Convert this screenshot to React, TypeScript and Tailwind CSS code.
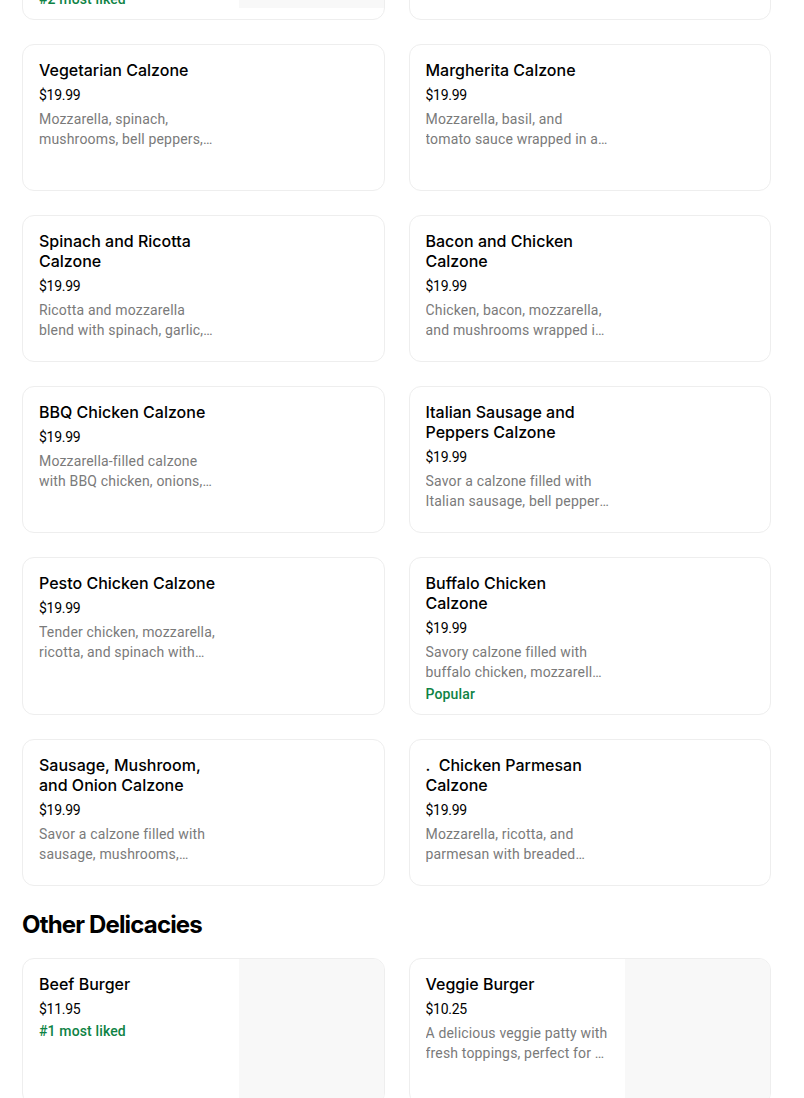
import React from 'react';

interface Item {
  name: string;
  price: string;
  desc?: string;
  tag?: string;
  image?: boolean;
}

const calzones: Item[] = [
  { name: 'Pepperoni and Sausage Calzone', price: '$19.99', desc: 'Pepperoni, sausage and mozzarella wrapped in a golden crust.', tag: '#2 most liked', image: true },
  { name: 'Meat Lovers Calzone', price: '$19.99', desc: 'Pepperoni, ham, bacon and sausage with mozzarella.' },
  { name: 'Vegetarian Calzone', price: '$19.99', desc: 'Mozzarella, spinach, mushrooms, bell peppers, onions and olives baked to perfection.' },
  { name: 'Margherita Calzone', price: '$19.99', desc: 'Mozzarella, basil, and tomato sauce wrapped in a crispy crust.' },
  { name: 'Spinach and Ricotta Calzone', price: '$19.99', desc: 'Ricotta and mozzarella blend with spinach, garlic, and herbs.' },
  { name: 'Bacon and Chicken Calzone', price: '$19.99', desc: 'Chicken, bacon, mozzarella, and mushrooms wrapped in a golden crust.' },
  { name: 'BBQ Chicken Calzone', price: '$19.99', desc: 'Mozzarella-filled calzone with BBQ chicken, onions, and cilantro.' },
  { name: 'Italian Sausage and Peppers Calzone', price: '$19.99', desc: 'Savor a calzone filled with Italian sausage, bell peppers and onions.' },
  { name: 'Pesto Chicken Calzone', price: '$19.99', desc: 'Tender chicken, mozzarella, ricotta, and spinach with basil pesto.' },
  { name: 'Buffalo Chicken Calzone', price: '$19.99', desc: 'Savory calzone filled with buffalo chicken, mozzarella and ranch.', tag: 'Popular' },
  { name: 'Sausage, Mushroom, and Onion Calzone', price: '$19.99', desc: 'Savor a calzone filled with sausage, mushrooms, onions and mozzarella.' },
  { name: '.  Chicken Parmesan Calzone', price: '$19.99', desc: 'Mozzarella, ricotta, and parmesan with breaded chicken and marinara.' },
];

const others: Item[] = [
  { name: 'Beef Burger', price: '$11.95', tag: '#1 most liked', image: true },
  { name: 'Veggie Burger', price: '$10.25', desc: 'A delicious veggie patty with fresh toppings, perfect for a light and healthy meal.', image: true },
];

const Card = ({ item }: { item: Item }) => (
  <div className="flex min-h-[147px] overflow-hidden rounded-xl border border-[#eeeeee] bg-white">
    <div className="min-w-0 flex-1 px-4 pt-[15px] pb-[10px] font-['Roboto',sans-serif]">
      <div className="whitespace-pre-wrap font-['Inter',sans-serif] text-base font-medium leading-5 text-black">
        {item.name}
      </div>
      <div className="mt-[5px] text-sm leading-5 tracking-[-0.02em] text-black">{item.price}</div>
      {item.desc && (
        <div className="mt-1 line-clamp-2 text-sm leading-5 tracking-[0.012em] text-[#7a7a7a]">{item.desc}</div>
      )}
      {item.tag && (
        <div className="mt-0.5 text-sm font-medium leading-5 tracking-[0.01em] text-[#0e8345]">{item.tag}</div>
      )}
    </div>
    <div className={`h-[145px] w-[145px] shrink-0 ${item.image ? 'bg-[#f8f8f8]' : ''}`} />
  </div>
);

export default function App() {
  return (
    <div className="h-[1098px] overflow-hidden bg-white pl-[22px] pr-[33px] font-['Inter',sans-serif]">
      <div className="-mt-[138px] grid grid-cols-2 gap-6">
        {calzones.map((c) => (
          <Card key={c.name} item={c} />
        ))}
      </div>
      <h2 className="mt-[23px] mb-[17px] text-2xl font-bold leading-8 tracking-[-0.035em] text-black">Other Delicacies</h2>
      <div className="grid grid-cols-2 gap-6">
        {others.map((c) => (
          <Card key={c.name} item={c} />
        ))}
      </div>
    </div>
  );
}
